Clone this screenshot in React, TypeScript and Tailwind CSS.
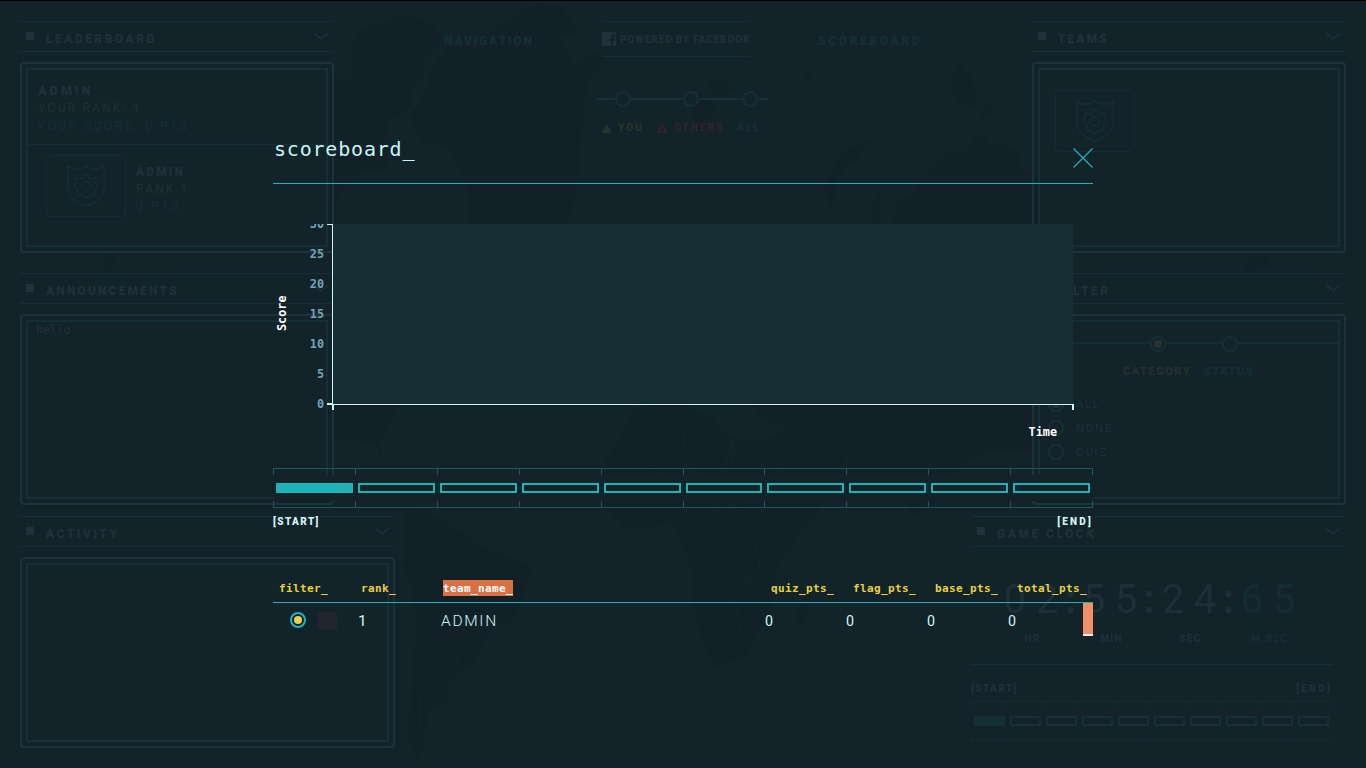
import React from "react";

const MONO = "font-['DejaVu_Sans_Mono',monospace]";

function Chevron() {
  return (
    <svg width="14" height="7" viewBox="0 0 14 7" fill="none" stroke="#19353e" strokeWidth="1.3">
      <path d="M0.5 0.5 L7 6 L13.5 0.5" />
    </svg>
  );
}

function PanelHeader({ title, tracking = "tracking-[2.5px]" }: { title: string; tracking?: string }) {
  return (
    <div className="flex h-[31px] shrink-0 items-center border-y border-[#142f37] pl-1.5 pr-[6px]">
      <span className="-mt-px h-2 w-2 bg-[#20323a]" />
      <span className={`ml-3 grow pt-[4px] text-[12px] font-black leading-4 text-[#1f3139] ${tracking}`}>{title}</span>
      <Chevron />
    </div>
  );
}

function Panel({ title, tracking, children }: { title: string; tracking?: string; children?: React.ReactNode }) {
  return (
    <section>
      <PanelHeader title={title} tracking={tracking} />
      <div className="mt-2.5 h-[191px] rounded-[4px] border-2 border-[#1f3139] p-1">
        <div className="h-full border-2 border-[#142f37]">{children}</div>
      </div>
    </section>
  );
}

function Emblem() {
  return (
    <div className="flex h-[62px] w-20 items-center justify-center rounded-[4px] border border-[#142d35]">
      <svg width="38" height="42" viewBox="0 0 38 42" fill="none" stroke="#142f37" strokeWidth="1.3">
        <path d="M1 1 C5 5 13 6 19 1 C25 6 33 5 37 1 V23 C37 32 28 38 19 41 C10 38 1 32 1 23 Z" />
        <circle cx="19" cy="21" r="4.5" />
        <path d="M17 9.5 H21 L22 13 L25 14 L28 12.5 L29.5 15 L28.5 18 L30.5 19.5 V22.5 L28 24 L27 27 L28 30 L25.5 31 L23 30 L21 32.5 H17 L15 30 L12.5 31 L10 30 L11 27 L10 24 L7.5 22.5 V19.5 L9.5 18 L8.5 15 L10 12.5 L13 14 L16 13 Z" />
      </svg>
    </div>
  );
}

function Radio({ on }: { on?: boolean }) {
  return (
    <span className="flex h-4 w-4 shrink-0 items-center justify-center rounded-full border-2 border-[#142f37] bg-[#13232a]">
      {on && <span className="h-2 w-2 rounded-full bg-[#27332c]" />}
    </span>
  );
}

function Track({ dim }: { dim?: boolean }) {
  const tick = dim ? "border-[#142b32]" : "border-[#145c63]";
  const fill = dim ? "border-[#152f37]" : "border-[#20b2b9]";
  return (
    <div className="flex h-10 pr-px">
      {Array.from({ length: 10 }, (_, i) => {
        const end = i === 9 ? "-mr-px border-r" : "";
        return (
          <div key={i} className="flex min-w-0 flex-1 flex-col">
            <div className={`h-[7px] border-l border-t ${end} ${tick}`} />
            <div className="flex h-[26px] items-center bg-[#14232a] pl-[3px] pr-[2px]">
              <div className={`h-2.5 w-full border-2 ${fill} ${i === 0 ? (dim ? "bg-[#152f37]" : "bg-[#20b2b9]") : ""}`} />
            </div>
            <div className={`h-[7px] border-b border-l ${end} ${tick}`} />
          </div>
        );
      })}
    </div>
  );
}

function WorldMap() {
  return (
    <svg className="absolute inset-0" width="1366" height="768" fill="#122128" stroke="#13242b" strokeWidth="1">
      <path d="M350 50 L362 28 L385 20 L400 15 L415 16 L430 22 L444 36 L440 46 L426 56 L424 75 L410 95 L414 104 L400 116 L388 122 L385 148 L390 160 L382 172 L368 170 L352 178 L344 188 L336 200 L334 224 H330 V72 L345 82 L352 74 Z" />
      <path d="M497 28 L518 12 L540 3 L562 6 L576 28 L572 38 L560 36 L570 52 L573 63 L592 52 L607 54 L600 66 L590 80 L584 100 L583 125 L581 160 L577 180 L575 200 L569 222 L560 280 L520 340 L490 300 L470 224 L465 180 L450 150 L422 142 L408 118 L424 96 L432 66 L446 48 L474 44 Z" />
      <path d="M692 88 L700 95 L712 103 L718 110 L708 118 L704 137 L697 128 L689 106 Z M707 84 L718 78 L728 79 L738 88 L730 96 L716 97 Z M952 75 L960 63 L970 75 L980 98 L972 108 L958 104 L951 88 Z M983 101 L995 111 L980 121 Z M804 72 L817 70 L805 84 Z" />
      <path d="M826 196 L821 190 L840 153 L858 143 L877 139 L862 153 L838 178 L832 210 Z M872 224 L873 198 L882 190 V224 Z M892 224 L898 200 L916 195 L918 182 L932 170 L936 162 L952 150 L965 151 L978 134 L990 135 L985 143 L1007 143 L1022 155 L1018 166 L1040 180 V224 Z" />
      <path d="M333 404 H398 L392 425 L380 440 L383 460 L373 443 L333 441 Z" />
      <path d="M404 515 L425 508 L438 518 L460 530 L480 545 L510 556 L533 566 L526 590 L515 620 L490 630 L472 665 L450 680 L448 700 L428 715 L420 765 L407 740 L411 680 L416 620 L410 585 L402 565 Z" />
      <path d="M636 407 L680 400 L694 412 L712 416 L722 432 L745 440 L770 438 L785 425 L760 420 L750 404 H1032 V452 L990 450 L960 468 L936 500 L912 519 L892 474 L835 480 L818 511 L796 540 L776 570 L775 600 L760 628 L748 656 L715 668 L700 640 L692 600 L690 565 L681 545 L675 525 L625 529 L602 505 L600 468 L618 440 Z" />
      <path d="M796 610 L812 585 L806 625 L796 630 Z M330 240 L345 228 H400 L333 350 Z M95 260 L112 253 L118 264 L108 273 Z M1240 258 L1268 254 L1272 266 L1248 272 Z" />
      <path fill="none" stroke="#14262d" d="M682 430 L690 470 L720 485 L732 440 M732 438 V470 M770 440 L780 475 M640 450 L660 470 L665 515 M700 515 L735 505 L770 500 L800 530 M755 540 L760 565 L735 600 L740 632 M720 575 L760 580 M845 410 L855 440 L840 475 M905 410 L930 430 L970 450 M420 520 L430 545 L460 550 M425 590 L450 610 L462 640 L455 670 M417 650 L421 735" />
    </svg>
  );
}

function ClockGroup({ digits, label, dim, last }: { digits: string; label: string; dim?: boolean; last?: boolean }) {
  const tone = dim ? "text-[#142d34]" : "text-[#1d3038]";
  return (
    <div className={`w-[79px] ${tone}`}>
      <div className="flex h-[53px] items-end text-[40px] leading-[53px]">
        <span className="w-8 text-center">{digits[0]}</span>
        <span className="w-8 text-center">{digits[1]}</span>
        {!last && <span className="w-[15px] text-center font-bold">:</span>}
      </div>
      <div className="mt-[7px] w-[67px] text-center text-[10px] font-black leading-3 tracking-[1.3px]">{label}</div>
    </div>
  );
}

function Background() {
  return (
    <div className="absolute inset-0 flex flex-col px-5 pt-[21px]">
      <div className="flex h-[495px] justify-between">
        <div className="flex w-[314px] flex-col gap-5">
          <Panel title="LEADERBOARD">
            <div className="flex h-[75px] flex-col border-b border-[#142f37] pl-2.5 pt-3">
              <span className="text-[13px] font-black leading-[18px] tracking-[2.7px] text-[#1f3139]">ADMIN</span>
              <span className="-mt-px text-[12px] leading-[18px] tracking-[2.2px] text-[#22312c]">YOUR RANK: 1</span>
              <span className="text-[12px] leading-[18px] tracking-[2.55px] text-[#142f37]">YOUR SCORE: 0 PTS</span>
            </div>
            <div className="flex pl-[18px] pt-2.5">
              <Emblem />
              <div className="ml-2.5 flex flex-col pt-[9px] leading-[17px]">
                <span className="text-[12px] font-black tracking-[2.1px] text-[#1f3139]">ADMIN</span>
                <span className="text-[12px] tracking-[2px] text-[#22312c]">RANK 1</span>
                <span className="text-[12px] tracking-[2.7px] text-[#142f37]">0 PTS</span>
              </div>
            </div>
          </Panel>
          <Panel title="ANNOUNCEMENTS" tracking="tracking-[2.15px]">
            <p className={`pl-2 text-[11.5px] leading-[17px] text-[#20323a] ${MONO}`}>hello</p>
          </Panel>
        </div>

        <div className="flex w-[480px] pl-px text-[12px] font-black text-[#142f37]">
          <span className="w-[154px] whitespace-nowrap pt-3 leading-4 tracking-[1.85px]">NAVIGATION</span>
          <div className="flex w-[172px] flex-col">
            <div className="ml-1.5 flex h-9 w-[148px] items-center border-y border-[#142f37]">
              <svg width="14" height="14" viewBox="0 0 14 14">
                <path fill="#20323a" d="M0 0H14V14H11.2V9H13L13.3 6.8H11.2V5.5C11.2 4.7 11.5 4.4 12.2 4.4H13.4V2.5C11 2 9 2.7 9 5.2V6.8H7.2V9H9V14H0Z" />
              </svg>
              <span className="ml-1 whitespace-nowrap pt-px text-[10px] leading-3 tracking-[0.85px] text-[#1f3139]">POWERED BY FACEBOOK</span>
            </div>
            <div className="mt-[34px] flex h-4 w-full items-center">
              <span className="h-0.5 w-[19px] bg-[#142f37]" />
              <Radio />
              <span className="h-0.5 w-[52px] bg-[#142f37]" />
              <Radio />
              <span className="h-0.5 w-[43px] bg-[#142f37]" />
              <Radio />
              <span className="h-0.5 w-2.5 bg-[#142f37]" />
            </div>
            <div className="mt-[13px] flex w-full items-center whitespace-nowrap pl-1.5 text-[10px] leading-4 tracking-[1.9px]">
              <svg width="10" height="9"><path d="M5 0L10 9H0Z" fill="#27332c" /></svg>
              <span className="ml-[6px] w-[39px] text-[#27332c]">YOU</span>
              <svg width="10" height="10" fill="none" stroke="#32222a" strokeWidth="1.8"><path d="M5 1L9 9H1Z" /></svg>
              <span className="ml-[7px] w-[63px] text-[#32222a]">OTHERS</span>
              <span>ALL</span>
            </div>
          </div>
          <span className="ml-[50px] w-[106px] whitespace-nowrap pt-3 leading-4 tracking-[2.6px]">SCOREBOARD</span>
        </div>

        <div className="flex w-[314px] flex-col gap-5">
          <Panel title="TEAMS" tracking="tracking-[2px]">
            <div className="pl-[15px] pt-5">
              <Emblem />
            </div>
          </Panel>
          <Panel title="FILTER">
            <div className="flex h-[43px] items-center">
              <span className="-mt-px h-0.5 grow bg-[#142f37]" />
              <Radio on />
              <span className="-mt-px h-0.5 w-14 bg-[#142f37]" />
              <Radio />
              <span className="-mt-px h-0.5 w-[100px] bg-[#142f37]" />
            </div>
            <div className="-mt-px flex pl-[83px] text-[11px] font-black leading-4 tracking-[1.5px]">
              <span className="w-[81px] text-[#25312b]">CATEGORY</span>
              <span className="text-[#142f37]">STATUS</span>
            </div>
            <div className="mt-4 flex flex-col gap-2 pl-2 text-[11px] leading-4 tracking-[1.9px] text-[#1f3139]">
              {["ALL", "NONE", "QUIZ"].map((name) => (
                <div key={name} className="flex h-4 items-center gap-3">
                  <Radio on={name === "ALL"} />
                  <span className="pt-px">{name}</span>
                </div>
              ))}
            </div>
          </Panel>
        </div>
      </div>

      <div className="flex justify-between">
        <div className="w-[375px]">
          <Panel title="ACTIVITY" />
        </div>
        <div className="w-[375px]">
          <PanelHeader title="GAME CLOCK" />
          <div className="flex h-[118px] w-[361px] border-b border-[#142f37] pl-[28px] pt-[26px]">
            <ClockGroup digits="02" label="HR" />
            <ClockGroup digits="55" label="MIN" />
            <ClockGroup digits="24" label="SEC" />
            <ClockGroup digits="65" label="M.SEC" dim last />
          </div>
          <div className="flex h-9 w-[361px] justify-between pt-4 text-[10px] font-black leading-4 text-[#1f3139]">
            <span className="tracking-[1.4px]">[START]</span>
            <span className="tracking-[2.2px]">[END]</span>
          </div>
          <div className="w-[361px]">
            <Track dim />
          </div>
        </div>
      </div>
    </div>
  );
}

function ScoreChart() {
  return (
    <svg className={`block ${MONO}`} width="820" height="244" fontWeight="bold" fontSize="11.8">
      <rect x="60" y="0" width="740" height="180" fill="#172e35" />
      <g fill="#75a3ba" textAnchor="end">
        {[30, 25, 20, 15, 10, 5, 0].map((v, i) => (
          <text key={v} x="51" y={4.4 + i * 30}>{v}</text>
        ))}
      </g>
      <g fill="none" stroke="#d0f5f5" shapeRendering="crispEdges">
        <path d="M54 0.5 H59.5 V180" />
        <path d="M54 180 H60" strokeWidth="2" />
        <path d="M60 180.5 H800" />
        <path d="M60 180 V186 M800 180 V186" strokeWidth="2" />
      </g>
      <text x="784" y="212.4" fill="#fff" textAnchor="end">Time</text>
      <text transform="translate(12.5 107) rotate(-90)" fill="#fff">Score</text>
    </svg>
  );
}

function Scoreboard() {
  return (
    <div className="absolute left-[273px] top-[134px] w-[820px]">
      <div className="flex h-[50px] justify-between border-b border-[#20b2b9]">
        <h1 className={`pl-px text-[20px] leading-[30px] tracking-[0.8px] text-[#c9f4f4] ${MONO}`}>scoreboard_</h1>
        <svg className="mt-3.5" width="20" height="20" stroke="#20b2b9" strokeWidth="1.2">
          <path d="M0.5 0.5L19.5 19.5M19.5 0.5L0.5 19.5" />
        </svg>
      </div>
      <div className="mt-10">
        <ScoreChart />
      </div>
      <Track />
      <div className="flex justify-between pt-[6px] text-[10px] font-black leading-4 text-[#d0f5f5]">
        <span className="tracking-[1.4px]">[START]</span>
        <span className="tracking-[2.2px]">[END]</span>
      </div>
      <div className={`mt-[50px] flex h-[23px] border-b border-[#20b2b9] pl-1.5 text-[11px] font-bold leading-[18px] tracking-[0.38px] text-[#e8d040] ${MONO}`}>
        <span className="w-[82px]">filter_</span>
        <span className="w-[82px]">rank_</span>
        <span className="w-[328px]">
          <span className="block h-4 w-[70px] bg-[#d96f42] text-white">team_name_</span>
        </span>
        <span className="w-[82px]">quiz_pts_</span>
        <span className="w-[82px]">flag_pts_</span>
        <span className="w-[82px]">base_pts_</span>
        <span>total_pts_</span>
      </div>
      <div className="flex h-[33px]">
        <div className="flex h-[34px] grow items-center text-[15.5px] leading-5 tracking-[1.7px] text-[#d0f5f5]">
          <div className="flex w-[81px] items-center pl-[17px]">
            <span className="flex h-4 w-4 items-center justify-center rounded-full border-2 border-[#20b2b9]">
              <span className="h-2 w-2 rounded-full bg-[#ebd24d]" />
            </span>
            <span className="ml-3 h-[17px] w-[19px] bg-[#222430]" />
          </div>
          <span className="w-[81px] pl-1 pt-0.5">1</span>
          <span className="w-[324px] pl-1.5 pt-0.5 font-light">ADMIN</span>
          {[0, 1, 2, 3].map((col) => (
            <span key={col} className="w-[81px] pl-1.5 pt-0.5">
              <span className="inline-block origin-left scale-x-[0.92]">0</span>
            </span>
          ))}
        </div>
        <div className="h-[33px] w-2.5 border-b-2 border-[#e6e9ea] bg-[#f08f68]" />
      </div>
    </div>
  );
}

export default function App() {
  return (
    <main className="relative h-[768px] w-[1366px] overflow-hidden bg-[#13232a] font-[Roboto,'Liberation_Sans',sans-serif]">
      <WorldMap />
      <Background />
      <Scoreboard />
      <div className="absolute inset-x-0 top-0 h-px bg-black" />
      <div className="absolute inset-x-0 bottom-0 h-px bg-[#1a202b]" />
    </main>
  );
}
